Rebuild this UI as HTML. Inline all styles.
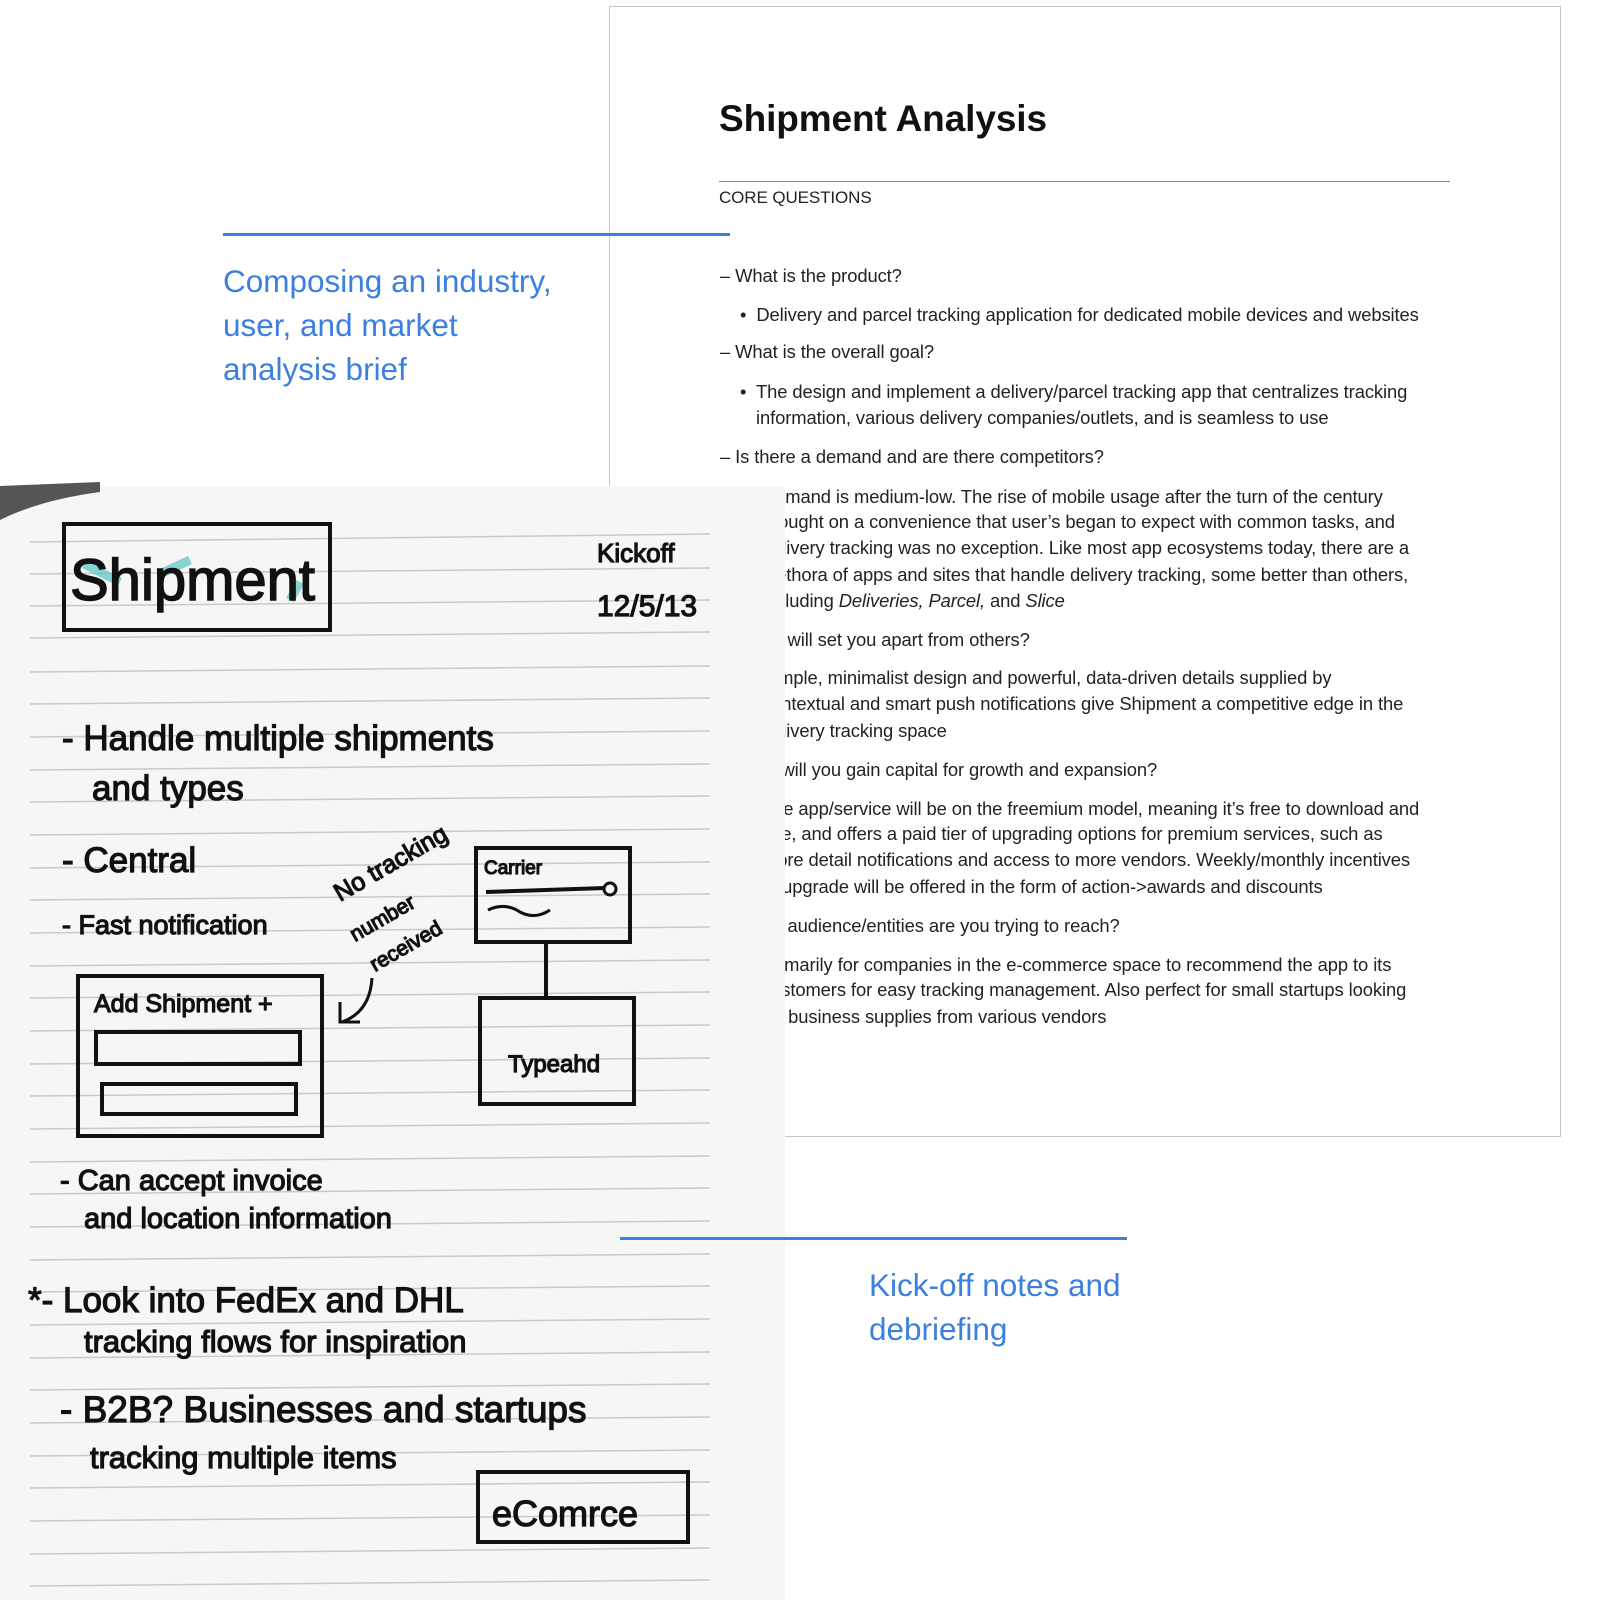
<!DOCTYPE html>
<html><head><meta charset="utf-8"><style>
html,body{margin:0;padding:0;background:#fff;width:1600px;height:1600px;overflow:hidden;position:relative;font-family:"Liberation Sans","DejaVu Sans",sans-serif}
.card{position:absolute;left:609px;top:6px;width:950px;height:1129px;border:1px solid #c8c8c8;background:#fff}
.t{position:absolute;color:#222;font-size:18.4px;white-space:nowrap;letter-spacing:-0.1px}
.blue{position:absolute;color:#3b80de;font-size:31.5px;line-height:44px;}
.bl{position:absolute;height:3px;background:#3b80de}
</style></head><body>
<div class="card"></div>
<div class="t" style="left:719px;top:98px;font-size:37px;font-weight:bold;color:#111">Shipment Analysis</div>
<div style="position:absolute;left:719px;top:181px;width:731px;height:1px;background:#888"></div>
<div class="t" style="left:719px;top:188px;font-size:17px">CORE QUESTIONS</div>

<div class="t" style="left:720px;top:265px">&#8211; What is the product?</div>
<div class="t" style="left:740px;top:304px">•&nbsp; Delivery and parcel tracking application for dedicated mobile devices and websites</div>
<div class="t" style="left:720px;top:341px">&#8211; What is the overall goal?</div>
<div class="t" style="left:740px;top:381px">•&nbsp; The design and implement a delivery/parcel tracking app that centralizes tracking</div>
<div class="t" style="left:756px;top:407px">information, various delivery companies/outlets, and is seamless to use</div>
<div class="t" style="left:720px;top:446px">&#8211; Is there a demand and are there competitors?</div>
<div class="t" style="left:762px;top:486px">Demand is medium-low. The rise of mobile usage after the turn of the century</div>
<div class="t" style="left:762px;top:511px">brought on a convenience that user’s began to expect with common tasks, and</div>
<div class="t" style="left:762px;top:537px">delivery tracking was no exception. Like most app ecosystems today, there are a</div>
<div class="t" style="left:762px;top:564px">plethora of apps and sites that handle delivery tracking, some better than others,</div>
<div class="t" style="left:762px;top:590px">including <i>Deliveries, Parcel,</i> and <i>Slice</i></div>
<div class="t" style="left:740px;top:629px">What will set you apart from others?</div>
<div class="t" style="left:762px;top:667px">Simple, minimalist design and powerful, data-driven details supplied by</div>
<div class="t" style="left:762px;top:693px">contextual and smart push notifications give Shipment a competitive edge in the</div>
<div class="t" style="left:762px;top:720px">delivery tracking space</div>
<div class="t" style="left:740px;top:759px">How will you gain capital for growth and expansion?</div>
<div class="t" style="left:762px;top:798px">The app/service will be on the freemium model, meaning it’s free to download and</div>
<div class="t" style="left:762px;top:823px">use, and offers a paid tier of upgrading options for premium services, such as</div>
<div class="t" style="left:762px;top:849px">more detail notifications and access to more vendors. Weekly/monthly incentives</div>
<div class="t" style="left:762px;top:876px">to upgrade will be offered in the form of action->awards and discounts</div>
<div class="t" style="left:740px;top:915px">What audience/entities are you trying to reach?</div>
<div class="t" style="left:762px;top:954px">Primarily for companies in the e-commerce space to recommend the app to its</div>
<div class="t" style="left:762px;top:979px">customers for easy tracking management. Also perfect for small startups looking</div>
<div class="t" style="left:762px;top:1006px">for business supplies from various vendors</div>

<div class="bl" style="left:223px;top:233px;width:507px"></div>
<div class="blue" style="left:223px;top:259px">Composing an industry,<br>user, and market<br>analysis brief</div>

<svg style="position:absolute;left:0;top:482px" width="785" height="1118" viewBox="0 0 785 1118">
<rect x="0" y="4" width="785" height="1114" fill="#f6f6f5"/>
<path d="M0 4 L100 0 L100 10 Q40 18 0 38 Z" fill="#555"/>
<g stroke="#c9c9c9" stroke-width="1.5">
<line x1="30" y1="60" x2="710" y2="52"/><line x1="30" y1="92" x2="710" y2="86"/><line x1="30" y1="124" x2="710" y2="118"/><line x1="30" y1="156" x2="710" y2="150"/><line x1="30" y1="190" x2="710" y2="184"/><line x1="30" y1="222" x2="710" y2="216"/><line x1="30" y1="255" x2="710" y2="249"/><line x1="30" y1="288" x2="710" y2="282"/><line x1="30" y1="320" x2="710" y2="314"/><line x1="30" y1="353" x2="710" y2="347"/><line x1="30" y1="386" x2="710" y2="380"/><line x1="30" y1="418" x2="710" y2="412"/><line x1="30" y1="451" x2="710" y2="445"/><line x1="30" y1="484" x2="710" y2="478"/><line x1="30" y1="516" x2="710" y2="510"/><line x1="30" y1="549" x2="710" y2="543"/><line x1="30" y1="582" x2="710" y2="576"/><line x1="30" y1="614" x2="710" y2="608"/><line x1="30" y1="647" x2="710" y2="641"/><line x1="30" y1="680" x2="710" y2="674"/><line x1="30" y1="712" x2="710" y2="706"/><line x1="30" y1="745" x2="710" y2="739"/><line x1="30" y1="778" x2="710" y2="772"/><line x1="30" y1="810" x2="710" y2="804"/><line x1="30" y1="843" x2="710" y2="837"/><line x1="30" y1="876" x2="710" y2="870"/><line x1="30" y1="908" x2="710" y2="902"/><line x1="30" y1="941" x2="710" y2="935"/><line x1="30" y1="974" x2="710" y2="968"/><line x1="30" y1="1006" x2="710" y2="1000"/><line x1="30" y1="1039" x2="710" y2="1033"/><line x1="30" y1="1072" x2="710" y2="1066"/><line x1="30" y1="1104" x2="710" y2="1098"/>
</g>
<g fill="#111" stroke="#111" stroke-width="1.2" font-family="Liberation Sans Narrow, Liberation Sans, sans-serif">
<path d="M80 80 L120 100 M160 92 L190 78 M290 118 L300 100" stroke="#5cc3c6" stroke-width="9" opacity=".7"/>
<rect x="64" y="42" width="266" height="106" fill="none" stroke-width="4"/>
<text x="70" y="118" font-size="58" stroke-width="1.5">Shipment</text>
<text x="597" y="80" font-size="26">Kickoff</text>
<text x="597" y="134" font-size="30">12/5/13</text>
<text x="62" y="268" font-size="35">- Handle multiple shipments</text>
<text x="92" y="318" font-size="35">and types</text>
<text x="62" y="390" font-size="35">- Central</text>
<text x="62" y="452" font-size="27">- Fast notification</text>
<text x="340" y="420" font-size="25" transform="rotate(-30 340 420)">No tracking</text>
<text x="355" y="460" font-size="21" transform="rotate(-30 355 460)">number</text>
<text x="375" y="490" font-size="21" transform="rotate(-30 375 490)">received</text>
<rect x="476" y="366" width="154" height="94" fill="none" stroke-width="4"/>
<text x="484" y="392" font-size="19">Carrier</text>
<line x1="486" y1="410" x2="605" y2="406" stroke-width="4"/><circle cx="610" cy="407" r="6" fill="none" stroke-width="3"/>
<path d="M488 428 Q505 420 520 430 Q535 438 550 428" fill="none" stroke-width="3"/>
<line x1="546" y1="460" x2="546" y2="514" stroke-width="4"/>
<rect x="480" y="516" width="154" height="106" fill="none" stroke-width="4"/>
<text x="508" y="590" font-size="24">Typeahd</text>
<rect x="78" y="494" width="244" height="160" fill="none" stroke-width="4"/>
<text x="94" y="530" font-size="25">Add Shipment +</text>
<rect x="96" y="550" width="204" height="32" fill="none" stroke-width="4"/>
<rect x="102" y="602" width="194" height="30" fill="none" stroke-width="4"/>
<path d="M372 496 Q370 530 342 540 M340 520 L340 540 L360 540" fill="none" stroke-width="3"/>
<text x="60" y="708" font-size="29">- Can accept invoice</text>
<text x="84" y="746" font-size="29">and location information</text>
<text x="28" y="830" font-size="35">*- Look into FedEx and DHL</text>
<text x="84" y="870" font-size="31">tracking flows for inspiration</text>
<text x="60" y="940" font-size="37">- B2B? Businesses and startups</text>
<text x="90" y="986" font-size="31">tracking multiple items</text>
<rect x="478" y="990" width="210" height="70" fill="none" stroke-width="4"/>
<text x="492" y="1044" font-size="36">eComrce</text>
</g>
</svg>

<div class="bl" style="left:620px;top:1237px;width:507px"></div>
<div class="blue" style="left:869px;top:1263px">Kick-off notes and<br>debriefing</div>
</body></html>
